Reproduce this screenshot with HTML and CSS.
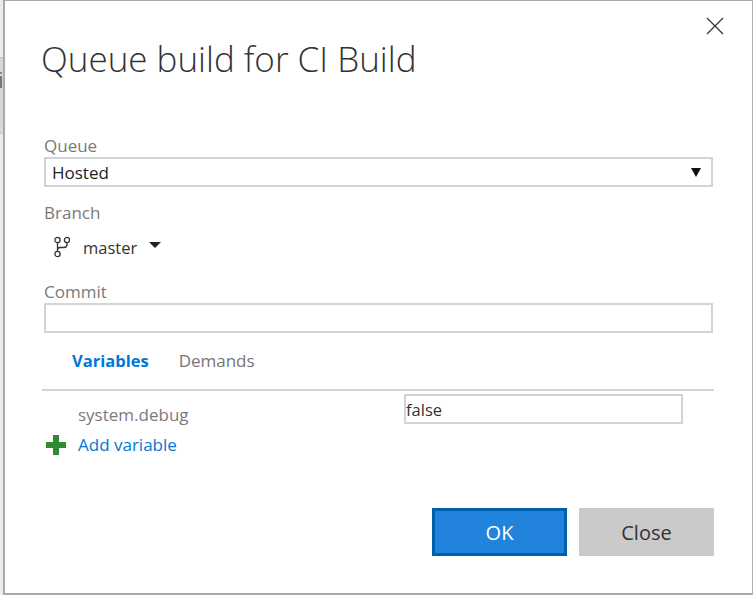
FILE: index.html
```html
<!DOCTYPE html>
<html lang="en">
<head>
<meta charset="utf-8">
<title>Queue build</title>
<link rel="stylesheet" href="styles.css">
</head>
<body>
<div class="backdrop"><span class="strip"></span><span class="strip-dash"></span><span class="strip-mark"></span></div>
<main class="dialog">
  <button class="close" aria-label="Close">
    <svg width="18" height="18" viewBox="0 0 18 18"><path d="M1 1L17 17M17 1L1 17" stroke="#333" stroke-width="1.2" fill="none"/></svg>
  </button>
  <h1 class="title">Queue build for CI Build</h1>
  <div class="label label-queue">Queue</div>
  <div class="field select"><span>Hosted</span><i class="select-arrow"></i></div>
  <div class="label label-branch">Branch</div>
  <div class="branch">
    <svg class="branch-icon" width="16" height="22" viewBox="0 0 16 22" fill="none" stroke="#333" stroke-width="1.3">
      <circle cx="3.5" cy="4" r="2.6"/><circle cx="13" cy="4" r="2.6"/><circle cx="3.5" cy="18" r="2.6"/>
      <path d="M3.5 6.6V15.4M13 6.6V8.5Q13 11.5 10 11.5H6Q3.5 11.5 3.5 14"/>
    </svg>
    <span class="branch-name">master</span><i class="branch-arrow"></i>
  </div>
  <div class="label label-commit">Commit</div>
  <div class="field commit"></div>
  <nav class="tabs"><span class="tab active">Variables</span><span class="tab">Demands</span></nav>
  <div class="variables">
    <div class="var-row"><span class="var-name">system.debug</span><div class="field var-value">false</div></div>
    <div class="add-row">
      <svg class="plus" width="22" height="22" viewBox="0 0 22 22"><path d="M8 1H14V8H21V14H14V21H8V14H1V8H8Z" fill="#2f8a35"/></svg>
      <a class="add-link">Add variable</a>
    </div>
  </div>
  <div class="actions"><button class="btn ok">OK</button><button class="btn cancel">Close</button></div>
</main>
</body>
</html>
```

FILE: styles.css
```css
* { box-sizing: border-box; }
html, body { margin: 0; height: 100%; overflow: hidden; }
body {
  width: 753px; height: 595px; background: #fff; display: flex;
  font-family: "Open Sans", "Noto Sans", sans-serif; font-size: 17px; color: #333;
}
.backdrop { width: 3px; height: 595px; background: #ececec; position: relative; flex: none; }
.strip { position: absolute; left: 0; top: 57px; width: 3px; height: 77px; background: #d6d6d6; border-top: 1px solid #c4c4c4; border-bottom: 1px solid #c4c4c4; }
.strip-dash { position: absolute; left: 0; top: 72px; width: 2px; height: 2px; background: #888; }
.strip-mark { position: absolute; left: 0; top: 76px; width: 2px; height: 12px; background: #777; }
.dialog { position: relative; width: 750px; height: 595px; background: #fff; border: 1px solid #a9a9a9; border-width: 1px 1px 2px 2px; border-right-color: #b0b0b0; padding: 0 36px 0 39px; }
.close { position: absolute; right: 28px; top: 16px; padding: 0; border: 0; background: none; line-height: 0; }
.title { margin: 31px 0 0 -3px; font-weight: 300; font-size: 35px; line-height: 54px; color: #333; letter-spacing: 0; }
.label { font-size: 17px; line-height: 22px; color: #7a7a7a; }
.label-queue { margin-top: 49px; }
.field { border: 2px solid #d4d4d4; background: #fff; }
.select { height: 30px; width: 669px; display: flex; align-items: center; justify-content: space-between; padding: 0 10px 0 6px; color: #222; }
.select-arrow { width: 0; height: 0; border: 5px solid transparent; border-top: 9px solid #111; border-bottom: 0; }
.label-branch { margin-top: 15px; }
.branch { display: flex; align-items: center; height: 34px; margin-top: 6px; padding-left: 10px; }
.branch-name { margin-left: 13px; color: #333; font-size: 16.5px; }
.branch-arrow { margin-left: 12px; margin-top: -5px; width: 0; height: 0; border: 6px solid transparent; border-top: 6px solid #222; border-bottom: 0; }
.label-commit { margin-top: 17px; }
.commit { height: 30px; width: 669px; }
.tabs { display: flex; gap: 30px; height: 58px; padding: 15px 0 0 30px; border-bottom: 2px solid #d4d4d4; width: 672px; margin-left: -2px; }
.tab { color: #757575; line-height: 26px; }
.tab.active { color: #0078d4; font-weight: 700; font-size: 16.5px; }
.variables { position: relative; }
.var-row { display: flex; justify-content: space-between; width: 639px; padding: 3px 0 0 34px; }
.var-name { color: #7a7a7a; line-height: 24px; margin-top: 9px; }
.var-value { width: 279px; height: 30px; line-height: 28px; padding-left: 0; color: #333; font-size: 16.5px; }
.add-row { display: flex; align-items: center; margin-top: 6px; }
.plus { margin-left: 1px; }
.add-link { margin-left: 11px; color: #0078d4; line-height: 24px; }
.actions { position: absolute; right: 38px; top: 507px; display: flex; gap: 12px; }
.btn { width: 135px; height: 48px; border: 0; font: inherit; font-size: 20px; }
.ok { background: #2283dc; border: 3px solid #0060ac; color: #fff; }
.cancel { background: #cacaca; color: #333; }
```
